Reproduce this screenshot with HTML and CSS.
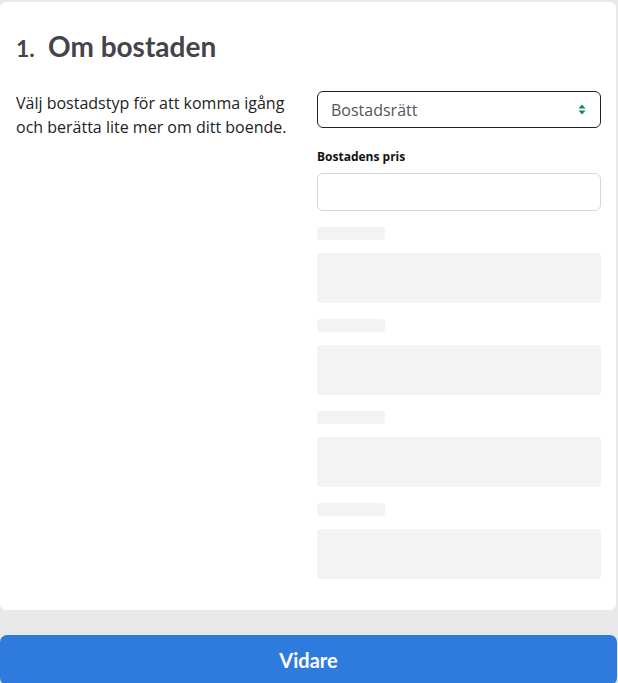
FILE: index.html
```html
<!DOCTYPE html>
<html lang="sv">
<head>
<meta charset="utf-8">
<title>Om bostaden</title>
<link rel="stylesheet" href="styles.css">
</head>
<body>
<div class="card">
  <h1 class="title"><span class="num">1.</span><span>Om bostaden</span></h1>
  <div class="row">
    <p class="intro">Välj bostadstyp för att komma igång och berätta lite mer om ditt boende.</p>
    <div class="fields">
      <div class="select">
        <span class="select-value">Bostadsrätt</span>
        <svg class="select-arrow" width="8" height="11" viewBox="0 0 8 11" aria-hidden="true">
          <path d="M4 0.5 L7.5 4.5 L0.5 4.5 Z" fill="#11875a"/>
          <path d="M4 10.5 L7.5 6.5 L0.5 6.5 Z" fill="#11875a"/>
        </svg>
      </div>
      <label class="label">Bostadens pris</label>
      <div class="input"></div>
      <div class="sk-label"></div>
      <div class="sk-block"></div>
      <div class="sk-label"></div>
      <div class="sk-block"></div>
      <div class="sk-label"></div>
      <div class="sk-block"></div>
      <div class="sk-label"></div>
      <div class="sk-block"></div>
    </div>
  </div>
</div>
<div class="actions">
  <button class="btn" type="button">Vidare</button>
</div>
</body>
</html>
```

FILE: styles.css
```css
* { box-sizing: border-box; }
html, body { margin: 0; padding: 0; }
body {
  background: #e9e9e9;
  font-family: "Open Sans", "Noto Sans", sans-serif;
  padding-top: 2px;
}
.card {
  width: 616px;
  background: #fff;
  border-radius: 6px;
  padding: 26px 15px 31px 16px;
}
.title {
  margin: 0 0 25px;
  font-family: Lato, "Noto Sans", sans-serif;
  font-weight: 700;
  font-size: 28px;
  line-height: 36px;
  color: #46434c;
  display: flex;
  align-items: baseline;
}
.num {
  width: 32px;
  font-size: 23px;
}
.row {
  display: grid;
  grid-template-columns: 284px 284px;
  column-gap: 17px;
}
.intro {
  margin: 0;
  font-size: 16px;
  line-height: 24px;
  color: #222;
}
.fields {
  display: flex;
  flex-direction: column;
}
.select {
  height: 37px;
  border: 1px solid #222;
  border-radius: 6px;
  display: flex;
  align-items: center;
  justify-content: space-between;
  padding: 0 14px 0 13px;
}
.select-value {
  font-size: 16px;
  color: #55555c;
}
.label {
  margin-top: 21px;
  font-size: 12px;
  font-weight: 700;
  line-height: 16px;
  color: #111;
}
.input {
  margin-top: 8px;
  height: 38px;
  border: 1px solid #d3d6db;
  border-radius: 6px;
}
.sk-label {
  margin-top: 16px;
  width: 68px;
  height: 13px;
  background: #f3f3f3;
  border-radius: 3px;
}
.sk-block {
  margin-top: 13px;
  height: 50px;
  background: #f3f3f3;
  border-radius: 3px;
}
.actions {
  margin-top: 25px;
  width: 617px;
}
.btn {
  display: block;
  width: 100%;
  height: 50px;
  border: 0;
  border-radius: 7px;
  background: #2f7bdd;
  color: #fff;
  font-family: Lato, "Noto Sans", sans-serif;
  font-weight: 700;
  font-size: 20px;
  padding: 0;
}
```
